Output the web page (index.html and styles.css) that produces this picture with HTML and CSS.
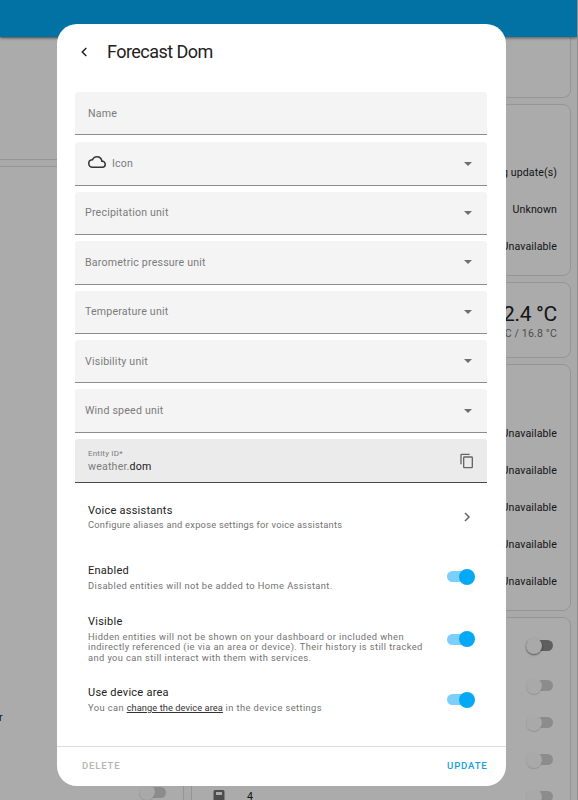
FILE: index.html
```
<!DOCTYPE html>
<html lang="en">
<head>
    <meta charset="UTF-8">
    <meta name="viewport" content="width=device-width, initial-scale=1.0">
    <link rel="stylesheet" href="styles.css">
    <title>Forecast Dom</title>
</head>
<body>

    <div class="dashboard">
        <header class="toolbar"></header>
        <main class="columns">
            <div class="column column-left">
                <section class="card card-first"></section>
                <section class="card card-rest">
                    <span class="cut-label">r</span>
                    <span class="switch off disabled"></span>
                </section>
            </div>
            <div class="column column-right">
                <section class="card card-top"></section>
                <section class="card card-updates">
                    <div class="state">Pending update(s)</div>
                    <div class="state">Unknown</div>
                    <div class="state">Unavailable</div>
                </section>
                <section class="card card-weather">
                    <div class="temp">12.4 °C</div>
                    <div class="range">24.1 °C / 16.8 °C</div>
                </section>
                <section class="card card-states">
                    <div class="state">Unavailable</div>
                    <div class="state">Unavailable</div>
                    <div class="state">Unavailable</div>
                    <div class="state">Unavailable</div>
                    <div class="state">Unavailable</div>
                </section>
                <section class="card card-switches">
                    <div class="switch-row switch-row-all"><span class="switch off"></span></div>
                    <div class="switch-row"><span class="switch off disabled"></span></div>
                    <div class="switch-row"><span class="switch off disabled"></span></div>
                    <div class="switch-row"><span class="switch off disabled"></span></div>
                    <div class="switch-row">
                        <svg class="device-icon" viewBox="0 0 12 14"><path fill-rule="evenodd" d="M2 0h8a1.500 1.500 0 0 1 1.500 1.500V14H.5V1.500A1.500 1.500 0 0 1 2 0zM3 2v3h6V2z"/></svg>
                        <span class="device-count">4</span>
                        <span class="switch off disabled"></span>
                    </div>
                </section>
            </div>
        </main>
    </div>

    <div class="scrim"></div>

    <div class="dialog">
        <header class="dialog-header">
            <svg class="back" viewBox="0 0 10 12"><path d="M7.300 2 3.300 6l4 4"/></svg>
            <h2>Forecast Dom</h2>
        </header>

        <div class="dialog-content">
            <div class="fields">
                <div class="field field-name"><span class="label">Name</span></div>
                <div class="field field-icon">
                    <svg class="cloud" viewBox="0 0 24 24"><path d="M19 18H6a4 4 0 0 1-4-4 4 4 0 0 1 4-4h.7A5.500 5.500 0 0 1 12 6a5.500 5.500 0 0 1 5.500 5.500v.5H19a3 3 0 0 1 0 6m.35-7.970A7.490 7.490 0 0 0 12 4C9.110 4 6.600 5.640 5.350 8.030A6 6 0 0 0 0 14a6 6 0 0 0 6 6h13a5 5 0 0 0 5-5c0-2.640-2.050-4.780-4.650-4.970z"/></svg>
                    <span class="label">Icon</span>
                    <span class="arrow"></span>
                </div>
                <div class="field"><span class="label">Precipitation unit</span><span class="arrow"></span></div>
                <div class="field"><span class="label">Barometric pressure unit</span><span class="arrow"></span></div>
                <div class="field"><span class="label">Temperature unit</span><span class="arrow"></span></div>
                <div class="field"><span class="label">Visibility unit</span><span class="arrow"></span></div>
                <div class="field"><span class="label">Wind speed unit</span><span class="arrow"></span></div>
                <div class="field field-entity">
                    <div class="entity">
                        <span class="entity-label">Entity ID*</span>
                        <span class="entity-value">weather.<b>dom</b></span>
                    </div>
                    <svg class="copy" viewBox="0 0 24 24"><path d="M19 21H8V7h11m0-2H8a2 2 0 0 0-2 2v14a2 2 0 0 0 2 2h11a2 2 0 0 0 2-2V7a2 2 0 0 0-2-2m-3-4H4a2 2 0 0 0-2 2v14h2V3h12V1z"/></svg>
                </div>
            </div>

            <div class="setting setting-voice">
                <div class="text">
                    <h3>Voice assistants</h3>
                    <p>Configure aliases and expose settings for voice assistants</p>
                </div>
                <svg class="chevron" viewBox="0 0 10 12"><path d="m3 2 4 4-4 4"/></svg>
            </div>
            <div class="setting setting-enabled">
                <div class="text">
                    <h3>Enabled</h3>
                    <p>Disabled entities will not be added to Home Assistant.</p>
                </div>
                <span class="switch on"></span>
            </div>
            <div class="setting setting-visible">
                <div class="text">
                    <h3>Visible</h3>
                    <p>Hidden entities will not be shown on your dashboard or included when<br>indirectly referenced (ie via an area or device). Their history is still tracked<br>and you can still interact with them with services.</p>
                </div>
                <span class="switch on"></span>
            </div>
            <div class="setting setting-area">
                <div class="text">
                    <h3>Use device area</h3>
                    <p>You can <a href="#">change the device area</a> in the device settings</p>
                </div>
                <span class="switch on"></span>
            </div>
        </div>

        <footer class="dialog-footer">
            <button class="delete">DELETE</button>
            <button class="update">UPDATE</button>
        </footer>
    </div>

</body>
</html>
```
FILE: styles.css
```
* {
    box-sizing: border-box;
}

body {
    margin: 0;
    height: 800px;
    overflow: hidden;
    position: relative;
    font-family: Roboto, sans-serif;
    font-size: 10.600px;
    color: #212121;
    background-color: #fafafa;
}

h2, h3, p {
    margin: 0;
    font-weight: 400;
}

/* dashboard behind the dialog */
.dashboard {
    height: 800px;
    overflow: hidden;
    border-right: 1px solid #d0d0d0;
}

.toolbar {
    height: 37px;
    background-color: #03a9f4;
    box-shadow: 0 1px 3px rgba(0, 0, 0, 0.5);
    position: relative;
}

.columns {
    display: flex;
    gap: 7px;
}

.column {
    display: flex;
    flex-direction: column;
    gap: 6px;
}

.column-left {
    width: 184px;
}

.column-right {
    width: 380px;
}

.card {
    background-color: #fdfdfd;
    border: 1px solid #dcdcdc;
    border-radius: 8px;
    flex-shrink: 0;
}

.column-left .card {
    border-left: 0;
    border-radius: 0 8px 8px 0;
}

.card-first {
    height: 123px;
}

.card-rest {
    height: 660px;
    padding: 544px 16px 0 0;
    display: flex;
    flex-direction: column;
}

.cut-label {
    margin-left: -1px;
    height: 73px;
}

.card-rest .switch {
    align-self: flex-end;
}

.card-top {
    height: 61px;
    border-top: 0;
    border-radius: 0 0 8px 8px;
}

.card-updates {
    height: 172px;
    padding: 49px 13px 0 0;
}

.card-weather {
    height: 76px;
    padding: 19px 13px 0 0;
    text-align: right;
}

.card-states {
    height: 247px;
    padding: 50px 13px 0 0;
}

.card-switches {
    height: 260px;
    padding: 9px 16px 0 20px;
}

.state {
    height: 37px;
    line-height: 37px;
    text-align: right;
    letter-spacing: 0.1px;
}

.temp {
    font-size: 21px;
    line-height: 25px;
    letter-spacing: -0.3px;
}

.range {
    line-height: 14px;
    color: #727272;
    letter-spacing: 0.15px;
}

.switch-row {
    height: 37px;
    display: flex;
    align-items: center;
}

.switch-row-all {
    margin-bottom: 3px;
}

.switch-row .switch {
    margin-left: auto;
}

.device-icon {
    width: 12px;
    height: 14px;
    fill: #727272;
    margin-left: 1px;
}

.device-count {
    margin-left: 22px;
    line-height: 10px;
}

.scrim {
    position: absolute;
    inset: 0;
    background-color: rgba(0, 0, 0, 0.32);
}

/* switches */
.switch {
    width: 28px;
    height: 16px;
    display: flex;
    align-items: center;
    flex-shrink: 0;
}

.switch::before {
    content: "";
    width: 27px;
    height: 11px;
    border-radius: 6px;
    background-color: #7bcff8;
    flex-shrink: 0;
}

.switch::after {
    content: "";
    width: 16px;
    height: 16px;
    margin-left: -15px;
    border-radius: 50%;
    background-color: #03a9f4;
    flex-shrink: 0;
}

.switch.off::before {
    background-color: #8c8c8c;
}

.switch.off::after {
    margin-left: -27px;
    background-color: #fafafa;
    box-shadow: 0 1px 2px rgba(0, 0, 0, 0.5);
}

.switch.disabled::before {
    background-color: #cfcfcf;
}

.switch.disabled::after {
    box-shadow: 0 1px 1px rgba(0, 0, 0, 0.15);
}

/* dialog */
.dialog {
    position: absolute;
    top: 24px;
    left: 57px;
    width: 448.500px;
    height: 762px;
    border-radius: 20px;
    background-color: #fff;
    display: flex;
    flex-direction: column;
}

.dialog-header {
    height: 68px;
    padding: 0 0 13px 22px;
    display: flex;
    align-items: center;
}

.dialog-header h2 {
    font-size: 18px;
    margin-left: 18px;
    letter-spacing: -0.55px;
}

.back, .chevron {
    width: 10px;
    height: 12px;
    fill: none;
    stroke: #212121;
    stroke-width: 1.500;
}

.dialog-content {
    flex: 1;
    padding: 0 18.500px 0 18px;
}

.fields {
    display: flex;
    flex-direction: column;
    gap: 6px;
}

.field {
    height: 43.400px;
    padding: 0 15px 0 10px;
    display: flex;
    align-items: center;
    background-color: #f4f4f4;
    border-bottom: 1px solid #8c8c8c;
    border-radius: 3px 3px 0 0;
    color: #7b7b7b;
    letter-spacing: 0.2px;
}

.field-name {
    margin-bottom: 1px;
    padding-left: 13px;
}

.field-icon {
    padding-left: 13px;
}

.cloud {
    width: 18px;
    height: 18px;
    margin-right: 6px;
    margin-bottom: 3px;
    fill: #333;
}

.arrow {
    margin-left: auto;
    border: 4px solid transparent;
    border-top-color: #6e6e6e;
    border-bottom: 0;
}

.field-entity {
    height: 44.400px;
    padding: 1px 12.500px 0 13px;
    background-color: #ebebeb;
    border-bottom-color: #4a4a4a;
}

.entity {
    display: flex;
    flex-direction: column;
}

.entity-label {
    font-size: 8px;
    line-height: 11px;
}

.entity-value {
    line-height: 15px;
}

.entity-value b {
    font-weight: 400;
    color: #212121;
}

.copy {
    width: 16px;
    height: 16px;
    margin-left: auto;
    fill: #666;
}

.setting {
    display: flex;
    align-items: center;
    justify-content: space-between;
    padding: 0 12px 0 13px;
}

.setting h3 {
    font-size: 11px;
    line-height: 14px;
    letter-spacing: 0.25px;
}

.setting p {
    margin-top: 3px;
    font-size: 9.300px;
    line-height: 10.700px;
    letter-spacing: 0.41px;
    white-space: nowrap;
    color: #727272;
}

.setting a {
    color: #333;
    letter-spacing: 0.05px;
}

.setting-voice {
    margin-top: 21px;
}

.setting-voice p {
    margin-top: 2px;
    letter-spacing: 0.24px;
}

.setting-voice .chevron {
    margin-right: 3px;
    stroke: #666;
}

.setting-enabled {
    margin-top: 33px;
}

.setting-enabled .switch {
    margin-bottom: 2px;
}

.setting-visible {
    margin-top: 23px;
}

.setting-area {
    margin-top: 22.500px;
}

.dialog-footer {
    height: 40px;
    padding: 0 18px 2px 25px;
    border-top: 1px solid #dcdcdc;
    display: flex;
    align-items: center;
    justify-content: space-between;
}

.dialog-footer button {
    padding: 0;
    border: 0;
    background: none;
    font-family: inherit;
    font-size: 9.600px;
    font-weight: 500;
    letter-spacing: 0.8px;
}

.dialog-footer .delete {
    color: #b5b5b5;
}

.dialog-footer .update {
    color: #159fdf;
}
```
